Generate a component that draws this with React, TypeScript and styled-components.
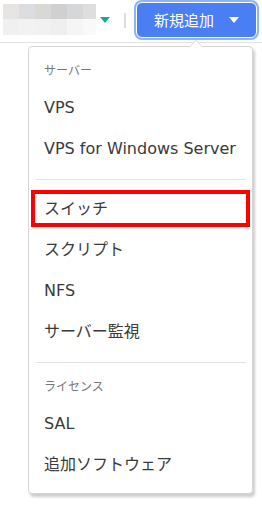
import styled, { createGlobalStyle } from "styled-components";

const mosaic = [
  ["#e6e5e3", "#dcdde0", "#d8d8d5", "#d0d0d0", "#d6d7d9", "#dedede"],
  ["#f0f0f0", "#f2f2f2", "#f1f1f1", "#efefef", "#f5f5f5", "#f9f9f9"]
];

const groups = [
  { label: "サーバー", items: ["VPS", "VPS for Windows Server"] },
  { label: "", items: ["スイッチ", "スクリプト", "NFS", "サーバー監視"] },
  { label: "ライセンス", items: ["SAL", "追加ソフトウェア"] }
];

const GlobalStyle = createGlobalStyle`
  html, body {
    margin: 0;
    padding: 0;
    background: #ffffff;
  }
  body {
    font-family: "DejaVu Sans", "Noto Sans CJK JP", sans-serif;
    color: #333333;
  }
`;

const Page = styled.div`
  width: 262px;
  height: 506px;
  overflow: hidden;
`;

const Header = styled.header`
  display: flex;
  align-items: center;
  height: 43px;
  padding: 0 5px 0 3px;
  box-sizing: border-box;
  border-bottom: 1px solid #e2e2e2;
`;

const Redacted = styled.div`
  display: grid;
  grid-template-columns: repeat(5, 16px) 13px;
  grid-template-rows: 15px 16px;
  margin-top: -3px;
`;

const Cell = styled.span<{ $c: string }>`
  background: ${({ $c }) => $c};
`;

const Caret = styled.span<{ $color: string }>`
  width: 0;
  height: 0;
  border-left: 5px solid transparent;
  border-right: 5px solid transparent;
  border-top: 6px solid ${({ $color }) => $color};
`;

const SelectCaret = styled(Caret)`
  margin: -2px 0 0 4px;
`;

const Divider = styled.span`
  width: 2px;
  height: 15px;
  background: #dddddd;
  margin: -1px 10px 0 14px;
`;

const AddButton = styled.button`
  display: flex;
  align-items: center;
  gap: 15px;
  height: 36px;
  width: 122px;
  box-sizing: border-box;
  margin-top: -3px;
  padding: 0 0 0 17px;
  border: 1px solid #ffffff;
  border-radius: 6px;
  background: #4a7ff3;
  box-shadow: 0 0 0 2px #8fb3f7;
  color: #ffffff;
  font-family: "Noto Sans CJK JP", sans-serif;
  font-size: 15px;
`;

const Menu = styled.nav`
  position: relative;
  width: 225px;
  margin: 3px 0 0 28px;
  box-sizing: border-box;
  border: 1px solid #d6d6d6;
  border-radius: 4px;
  background: #ffffff;
  box-shadow: 2px 3px 3px rgba(0, 0, 0, 0.2);
  padding-bottom: 8px;

  &::before,
  &::after {
    content: "";
    position: absolute;
    left: 161px;
    width: 0;
    height: 0;
    border-left: 6px solid transparent;
    border-right: 6px solid transparent;
  }
  &::before {
    top: -7px;
    border-bottom: 6px solid #d6d6d6;
  }
  &::after {
    top: -6px;
    border-bottom: 6px solid #ffffff;
  }
`;

const Separator = styled.hr`
  border: 0;
  border-top: 1px solid #e3e3e3;
  margin: 10px 6px 0 7px;
`;

const GroupLabel = styled.div`
  padding: 13px 15px 7px;
  line-height: 20px;
  font-family: "Noto Sans CJK JP", sans-serif;
  font-size: 12px;
  color: #777777;
`;

const Group = styled.div<{ $plain?: boolean }>`
  padding-top: ${({ $plain }) => ($plain ? "8px" : "0")};
`;

const Item = styled.div<{ $marked?: boolean }>`
  height: 41px;
  line-height: 41px;
  padding: 0 15px;
  font-size: 16px;
  color: #3a3a3a;
  white-space: nowrap;
  outline: ${({ $marked }) => ($marked ? "4px solid #ff0000" : "none")};
  outline-offset: -6px;
`;

export default function App() {
  return (
    <Page>
      <GlobalStyle />
      <Header>
        <Redacted>
          {mosaic.flat().map((c, i) => (
            <Cell key={i} $c={c} />
          ))}
        </Redacted>
        <SelectCaret $color="#17a898" />
        <Divider />
        <AddButton type="button">
          新規追加
          <Caret $color="#ffffff" />
        </AddButton>
      </Header>

      <Menu aria-label="新規追加メニュー">
        {groups.map((group, gi) => (
          <div key={gi}>
            {gi > 0 && <Separator />}
            <Group $plain={!group.label}>
              {group.label && <GroupLabel>{group.label}</GroupLabel>}
              {group.items.map((item) => (
                <Item key={item} $marked={item === "スイッチ"}>
                  {item}
                </Item>
              ))}
            </Group>
          </div>
        ))}
      </Menu>
    </Page>
  );
}
